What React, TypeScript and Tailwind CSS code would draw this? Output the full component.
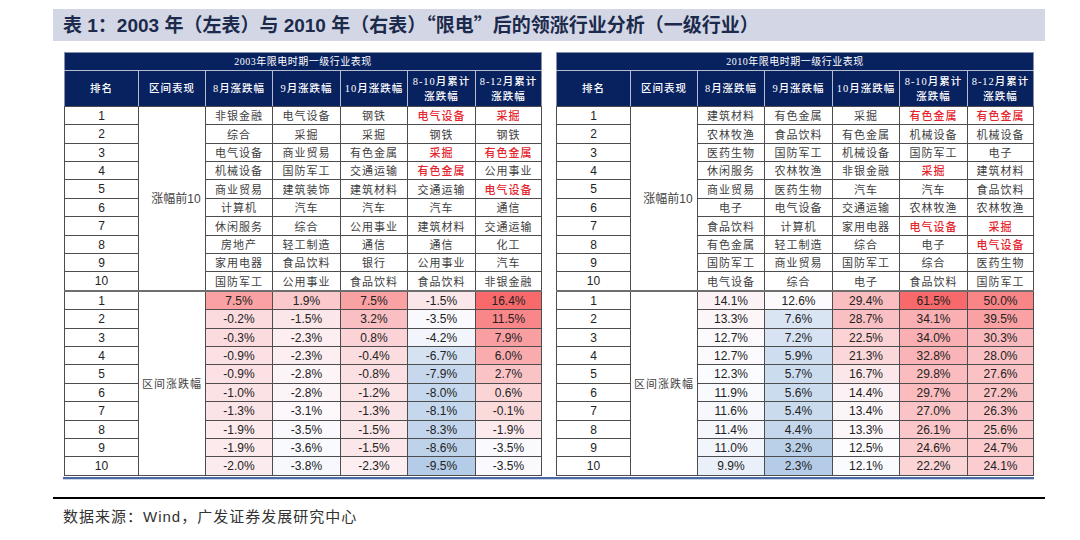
import React from "react";

type Cell = { t: string; red?: boolean };

const leftNames: string[][] = [
  ["非银金融", "电气设备", "钢铁", "*电气设备", "*采掘"],
  ["综合", "采掘", "采掘", "钢铁", "钢铁"],
  ["电气设备", "商业贸易", "有色金属", "*采掘", "*有色金属"],
  ["机械设备", "国防军工", "交通运输", "*有色金属", "公用事业"],
  ["商业贸易", "建筑装饰", "建筑材料", "交通运输", "*电气设备"],
  ["计算机", "汽车", "汽车", "汽车", "通信"],
  ["休闲服务", "综合", "公用事业", "建筑材料", "交通运输"],
  ["房地产", "轻工制造", "通信", "通信", "化工"],
  ["家用电器", "食品饮料", "银行", "公用事业", "汽车"],
  ["国防军工", "公用事业", "食品饮料", "食品饮料", "非银金融"],
];

const rightNames: string[][] = [
  ["建筑材料", "有色金属", "采掘", "*有色金属", "*有色金属"],
  ["农林牧渔", "食品饮料", "有色金属", "机械设备", "机械设备"],
  ["医药生物", "国防军工", "机械设备", "国防军工", "电子"],
  ["休闲服务", "农林牧渔", "非银金融", "*采掘", "建筑材料"],
  ["商业贸易", "医药生物", "汽车", "汽车", "食品饮料"],
  ["电子", "电气设备", "交通运输", "农林牧渔", "农林牧渔"],
  ["食品饮料", "计算机", "家用电器", "*电气设备", "*采掘"],
  ["有色金属", "轻工制造", "综合", "电子", "*电气设备"],
  ["国防军工", "商业贸易", "国防军工", "综合", "医药生物"],
  ["电气设备", "综合", "电子", "食品饮料", "国防军工"],
];

// columns of values
const leftVals: number[][] = [
  [7.5, -0.2, -0.3, -0.9, -0.9, -1.0, -1.3, -1.9, -1.9, -2.0],
  [1.9, -1.5, -2.3, -2.3, -2.8, -2.8, -3.1, -3.5, -3.6, -3.8],
  [7.5, 3.2, 0.8, -0.4, -0.8, -1.2, -1.3, -1.5, -1.5, -2.3],
  [-1.5, -3.5, -4.2, -6.7, -7.9, -8.0, -8.1, -8.3, -8.6, -9.5],
  [16.4, 11.5, 7.9, 6.0, 2.7, 0.6, -0.1, -1.9, -3.5, -3.5],
];

const rightVals: number[][] = [
  [14.1, 13.3, 12.7, 12.7, 12.3, 11.9, 11.6, 11.4, 11.0, 9.9],
  [12.6, 7.6, 7.2, 5.9, 5.7, 5.6, 5.4, 4.4, 3.2, 2.3],
  [29.4, 28.7, 22.5, 21.3, 16.7, 14.4, 13.4, 13.3, 12.5, 12.1],
  [61.5, 34.1, 34.0, 32.8, 29.8, 29.7, 27.0, 26.1, 24.6, 22.2],
  [50.0, 39.5, 30.3, 28.0, 27.6, 27.2, 26.3, 25.6, 24.7, 24.1],
];

function heat(v: number, min: number, mid: number, max: number): string {
  const white = [252, 252, 255];
  let target: number[];
  let t: number;
  if (v >= mid) {
    target = [248, 105, 107];
    t = Math.pow((v - mid) / (max - mid), 0.8);
  } else {
    target = [180, 204, 231];
    t = (mid - v) / (mid - min);
  }
  t = Math.max(0, Math.min(1, t));
  const c = white.map((w, i) => Math.round(w + (target[i] - w) * t));
  return `rgb(${c[0]},${c[1]},${c[2]})`;
}

const rowsTracks = "grid-rows-[17px_18px_17px_17px_18px_17px_18px_17px_17px_18px]";
const colTracks = "grid-cols-[73px_66px_66px_67px_66px_67px_65px]";

const headers: React.ReactNode[] = [
  "排名",
  "区间表现",
  "8月涨跌幅",
  "9月涨跌幅",
  "10月涨跌幅",
  <>
    8-10月累计
    <br />
    涨跌幅
  </>,
  <>
    8-12月累计
    <br />
    涨跌幅
  </>,
];

function parse(s: string): Cell {
  if (s.startsWith("*")) return { t: s.slice(1), red: true };
  return { t: s };
}

function Table({
  title,
  names,
  vals,
  scale,
}: {
  title: string;
  names: string[][];
  vals: number[][];
  scale: [number, number, number];
}) {
  return (
    <div className="w-[478px] flex flex-col">
      <div className="h-[18px] bg-[#08215f] border-x border-t border-[#8890aa] flex items-center justify-center text-white text-[10px] tracking-[0.5px] font-['Liberation_Serif','Noto_Sans_CJK_SC',serif]">
        {title}
      </div>
      <div className="h-px bg-[#b7bdd0]" />
      <div className={`grid ${colTracks} h-[35px] gap-x-px bg-[#b7bdd0] border-x border-[#8890aa]`}>
        {headers.map((h, i) => (
          <div
            key={i}
            className="bg-[#08215f] flex items-center justify-center text-center text-white text-[10.5px] leading-[15px] tracking-[1px] font-medium font-['Liberation_Serif','Noto_Sans_CJK_SC',serif]"
          >
            {h}
          </div>
        ))}
      </div>
      {/* section 1 */}
      <div
        className={`grid ${colTracks} ${rowsTracks} gap-px bg-[#4d4d4d] border-x border-t border-[#4d4d4d]`}
      >
        {names.map((row, r) => (
          <React.Fragment key={r}>
            <div className="bg-white flex items-center justify-center text-[12px] text-[#222] font-['Liberation_Sans',sans-serif]">
              {r + 1}
            </div>
            {r === 0 && (
              <div className="row-span-10 bg-white flex items-center justify-center pl-[8px] text-[12px] text-[#444] font-['Liberation_Sans','Noto_Sans_CJK_SC',sans-serif]">
                涨幅前10
              </div>
            )}
            {row.map((s, c) => {
              const cell = parse(s);
              return (
                <div
                  key={c}
                  className={`bg-white flex items-center justify-center text-[11px] tracking-[1px] font-['Noto_Sans_CJK_SC',sans-serif] ${
                    cell.red ? "text-[#e5252d] font-medium" : "text-[#404040]"
                  }`}
                >
                  {cell.t}
                </div>
              );
            })}
          </React.Fragment>
        ))}
      </div>
      <div className="h-[2px] bg-[#6e6e6e]" />
      {/* section 2 */}
      <div
        className={`grid ${colTracks} ${rowsTracks} gap-px bg-[#4d4d4d] border-x border-b border-[#4d4d4d]`}
      >
        {Array.from({ length: 10 }).map((_, r) => (
          <React.Fragment key={r}>
            <div className="bg-white flex items-center justify-center text-[12px] text-[#222] font-['Liberation_Sans',sans-serif]">
              {r + 1}
            </div>
            {r === 0 && (
              <div className="row-span-10 bg-white flex items-center justify-center text-[11px] tracking-[1px] text-[#444] font-['Noto_Sans_CJK_SC',sans-serif]">
                区间涨跌幅
              </div>
            )}
            {vals.map((col, c) => {
              const v = col[r];
              return (
                <div
                  key={c}
                  className="flex items-center justify-center text-[12px] text-[#222] font-['Liberation_Sans',sans-serif]"
                  style={{ backgroundColor: heat(v, scale[0], scale[1], scale[2]) }}
                >
                  {v.toFixed(1)}%
                </div>
              );
            })}
          </React.Fragment>
        ))}
      </div>
    </div>
  );
}

export default function App() {
  return (
    <div className="w-[1080px] h-[540px] bg-white overflow-hidden flex flex-col">
      <div className="mt-[9px] ml-[53px] w-[992px] h-[32px] bg-[#d3d7e5] flex items-center pl-[10px]">
        <span className="text-[19px] font-bold text-[#1c2a4c] font-['Liberation_Sans','Noto_Sans_CJK_SC',sans-serif]">
          表 1：2003 年（左表）与 2010 年（右表）
          <span className="font-['Noto_Sans_CJK_SC',sans-serif]">“限电”</span>
          后的领涨行业分析（一级行业）
        </span>
      </div>
      <div className="mt-[11px] ml-[64px] flex gap-[14px]">
        <Table title="2003年限电时期一级行业表现" names={leftNames} vals={leftVals} scale={[-9.5, -3.3, 16.4]} />
        <Table title="2010年限电时期一级行业表现" names={rightNames} vals={rightVals} scale={[2.3, 12.4, 61.5]} />
      </div>
      <div className="mt-px ml-[63px] w-[971px] h-[2px] bg-[#4a68a3]" />
      <div className="ml-[63px] w-[971px] h-px bg-[#c9d3e6]" />
      <div className="mt-[17px] ml-[53px] w-[992px] h-[2px] bg-black" />
      <div className="mt-[7px] ml-[63px] text-[15px] tracking-[1px] text-[#333] font-['Liberation_Sans','Noto_Sans_CJK_SC',sans-serif]">
        数据来源：Wind，广发证券发展研究中心
      </div>
    </div>
  );
}
